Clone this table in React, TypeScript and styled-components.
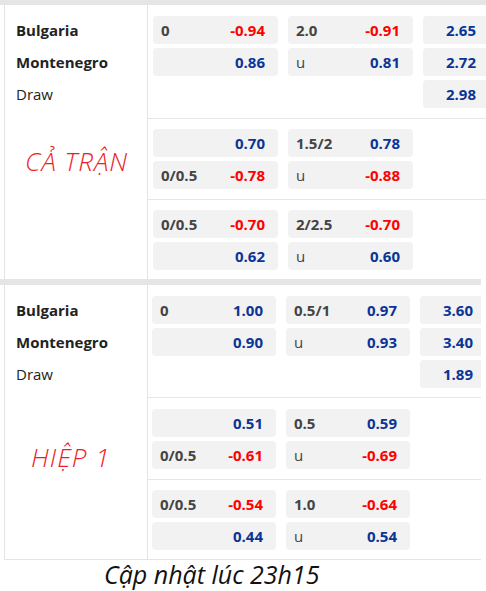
import React from 'react'
import styled, { createGlobalStyle } from 'styled-components'

const GlobalStyle = createGlobalStyle`
  html, body {
    margin: 0;
    padding: 0;
    background: #fff;
    font-family: "Open Sans", "Liberation Sans", sans-serif;
  }
`

const Page = styled.div`
  width: 486px;
  height: 591px;
  overflow: hidden;
  display: flex;
  flex-direction: column;
`

const Panel = styled.div<{ $width: number }>`
  width: ${(p) => p.$width}px;
  overflow: hidden;
  display: flex;
  flex-direction: column;
`

const TopBar = styled.div<{ $h: number }>`
  height: ${(p) => p.$h}px;
  background: #e5e5e5;
`

const Body = styled.div<{ $closed?: boolean }>`
  margin-left: 4px;
  display: grid;
  grid-template-columns: 143px 1fr;
  border-left: 1px solid #e4e4e4;
  border-bottom: ${(p) => (p.$closed ? '1px solid #e4e4e4' : 'none')};
`

const Teams = styled.div`
  border-right: 1px solid #e4e4e4;
  padding: 11px 0 0 11px;
  display: flex;
  flex-direction: column;
  gap: 4px;
`

const TeamName = styled.div<{ $bold?: boolean }>`
  height: 28px;
  display: flex;
  align-items: center;
  font-size: 15px;
  font-weight: ${(p) => (p.$bold ? 700 : 400)};
  color: #222;
`

const LabelCell = styled.div<{ $top: number; $left: number }>`
  grid-row: span 2;
  border-right: 1px solid #e4e4e4;
  padding: ${(p) => p.$top}px 0 0 ${(p) => p.$left}px;
`

const Label = styled.div`
  font-size: 26px;
  line-height: 30px;
  letter-spacing: 1px;
  font-style: italic;
  font-weight: 300;
  color: #ee1c25;
  white-space: nowrap;
`

const Group = styled.div<{ $box: number; $pad: number; $last?: boolean; $pt: number; $pb: number }>`
  display: grid;
  grid-template-columns: ${(p) => p.$box}px ${(p) => p.$box}px 66px;
  column-gap: 10px;
  row-gap: 4px;
  padding: ${(p) => p.$pt}px 0 ${(p) => p.$pb}px ${(p) => p.$pad}px;
  border-bottom: ${(p) => (p.$last ? 'none' : '1px solid #e6e6e6')};
`

const Box = styled.div`
  height: 28px;
  border-radius: 4px;
  background: #f2f2f2;
  display: flex;
  align-items: center;
  justify-content: space-between;
  padding: 0 13px 0 8px;
  font-size: 15px;
`

const Empty = styled.div`
  height: 28px;
`

const Hdp = styled.span<{ $light?: boolean }>`
  color: #444;
  font-weight: ${(p) => (p.$light ? 400 : 700)};
`

const Odd = styled.span<{ $neg?: boolean }>`
  margin-left: auto;
  font-weight: 700;
  color: ${(p) => (p.$neg ? '#ff0000' : '#0a3596')};
`

const Footer = styled.div`
  padding-left: 104px;
  font-size: 25px;
  line-height: 28px;
  font-style: italic;
  color: #111;
`

type Cell = { h?: string; v: string } | null
type Row = [Cell, Cell, string | null]

interface PanelData {
  width: number
  bar: number
  box: number
  pad: number
  label: string
  labelTop: number
  labelLeft: number
  closed?: boolean
  groups: { rows: Row[]; pt: number; pb: number }[]
}

const panels: PanelData[] = [
  {
    width: 486,
    bar: 5,
    box: 125,
    pad: 5,
    label: 'CẢ TRẬN',
    labelTop: 27,
    labelLeft: 20,
    groups: [
      {
        pt: 11,
        pb: 10,
        rows: [
          [{ h: '0', v: '-0.94' }, { h: '2.0', v: '-0.91' }, '2.65'],
          [{ v: '0.86' }, { h: 'u', v: '0.81' }, '2.72'],
          [null, null, '2.98'],
        ],
      },
      {
        pt: 10,
        pb: 10,
        rows: [
          [{ v: '0.70' }, { h: '1.5/2', v: '0.78' }, null],
          [{ h: '0/0.5', v: '-0.78' }, { h: 'u', v: '-0.88' }, null],
        ],
      },
      {
        pt: 10,
        pb: 9,
        rows: [
          [{ h: '0/0.5', v: '-0.70' }, { h: '2/2.5', v: '-0.70' }, null],
          [{ v: '0.62' }, { h: 'u', v: '0.60' }, null],
        ],
      },
    ],
  },
  {
    width: 481,
    bar: 6,
    box: 124,
    pad: 4,
    label: 'HIỆP 1',
    labelTop: 44,
    labelLeft: 26,
    closed: true,
    groups: [
      {
        pt: 11,
        pb: 9,
        rows: [
          [{ h: '0', v: '1.00' }, { h: '0.5/1', v: '0.97' }, '3.60'],
          [{ v: '0.90' }, { h: 'u', v: '0.93' }, '3.40'],
          [null, null, '1.89'],
        ],
      },
      {
        pt: 11,
        pb: 10,
        rows: [
          [{ v: '0.51' }, { h: '0.5', v: '0.59' }, null],
          [{ h: '0/0.5', v: '-0.61' }, { h: 'u', v: '-0.69' }, null],
        ],
      },
      {
        pt: 10,
        pb: 9,
        rows: [
          [{ h: '0/0.5', v: '-0.54' }, { h: '1.0', v: '-0.64' }, null],
          [{ v: '0.44' }, { h: 'u', v: '0.54' }, null],
        ],
      },
    ],
  },
]

const OddsCell = ({ cell }: { cell: Cell }) => {
  if (!cell) return <Empty />
  return (
    <Box>
      {cell.h && <Hdp $light={cell.h === 'u'}>{cell.h}</Hdp>}
      <Odd $neg={cell.v.startsWith('-')}>{cell.v}</Odd>
    </Box>
  )
}

const OddsPanel = ({ data }: { data: PanelData }) => (
  <Panel $width={data.width}>
    <TopBar $h={data.bar} />
    <Body $closed={data.closed}>
      <Teams>
        <TeamName $bold>Bulgaria</TeamName>
        <TeamName $bold>Montenegro</TeamName>
        <TeamName>Draw</TeamName>
      </Teams>
      {data.groups.map((g, gi) => (
        <React.Fragment key={gi}>
          {gi === 1 && (
            <LabelCell $top={data.labelTop} $left={data.labelLeft}>
              <Label>{data.label}</Label>
            </LabelCell>
          )}
          <Group $box={data.box} $pad={data.pad} $pt={g.pt} $pb={g.pb} $last={gi === 2}>
            {g.rows.map((r, ri) => (
              <React.Fragment key={ri}>
                <OddsCell cell={r[0]} />
                <OddsCell cell={r[1]} />
                {r[2] ? <OddsCell cell={{ v: r[2] }} /> : <Empty />}
              </React.Fragment>
            ))}
          </Group>
        </React.Fragment>
      ))}
    </Body>
  </Panel>
)

export default function App() {
  return (
    <Page>
      <GlobalStyle />
      {panels.map((p, i) => (
        <OddsPanel key={i} data={p} />
      ))}
      <Footer>Cập nhật lúc 23h15</Footer>
    </Page>
  )
}
